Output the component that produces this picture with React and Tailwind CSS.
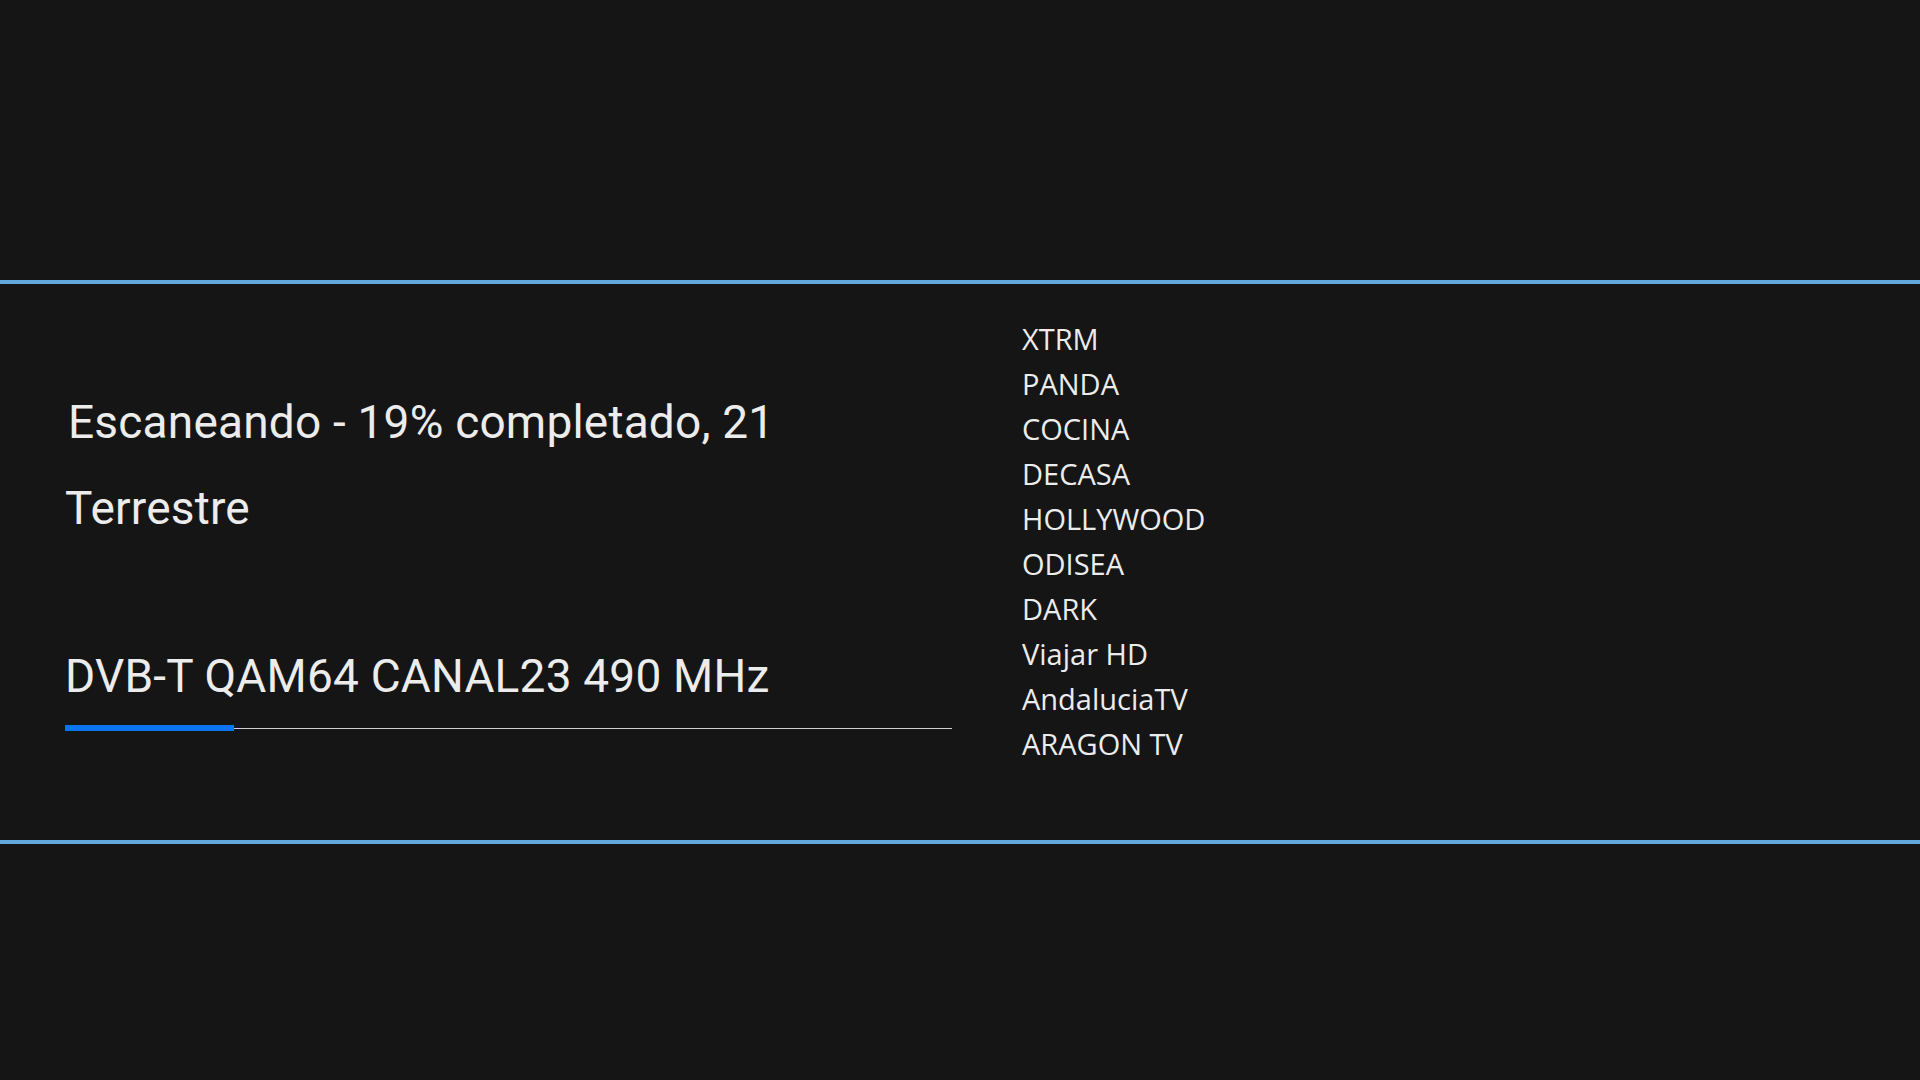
import React from 'react'

const CHANNELS = [
  'XTRM',
  'PANDA',
  'COCINA',
  'DECASA',
  'HOLLYWOOD',
  'ODISEA',
  'DARK',
  'Viajar HD',
  'AndaluciaTV',
  'ARAGON TV',
]

const progress = 19

const App = () => {
  return (
    <div className="w-[1920px] h-[1080px] bg-[#151515] flex flex-col overflow-hidden">
      <div className="h-[280px] flex-shrink-0" />
      <div className="h-[4px] bg-[#62a8dc] flex-shrink-0" />

      {/* Scan panel */}
      <div className="h-[556px] flex flex-shrink-0">
        <div className="w-[952px] pl-[65px] pt-[111px] flex flex-col font-['Roboto',sans-serif] text-[46px] leading-[54px] tracking-[0.2px] text-[#ececec]">
          <p className="ml-[3px]">Escaneando - {progress}% completado, 21</p>
          <p className="mt-[32px]">Terrestre</p>
          <p className="mt-[114px]">DVB-T QAM64 CANAL23 490 MHz</p>
          <div className="mt-[22px] h-[6px] flex items-center">
            <div className="h-full bg-[#0a73ef]" style={{ width: `${progress}%` }} />
            <div className="flex-1 h-px bg-[#cfcfcf]" />
          </div>
        </div>
        <div className="pl-[70px] pt-[32px] font-['Open_Sans',sans-serif] text-[29px] leading-[45px] text-[#ececec]">
          {CHANNELS.map((c) => (
            <p key={c}>{c}</p>
          ))}
        </div>
      </div>

      <div className="h-[4px] bg-[#62a8dc] flex-shrink-0" />
      <div className="flex-1" />
    </div>
  )
}

export default App
